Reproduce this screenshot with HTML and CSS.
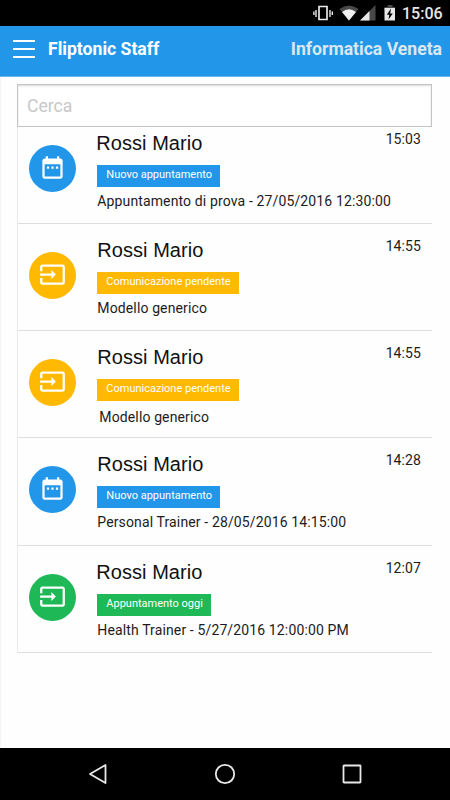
FILE: index.html
```html
<!DOCTYPE html>
<html lang="it">
<head>
    <meta charset="UTF-8">
    <meta name="viewport" content="width=device-width, initial-scale=1.0">
    <title>Fliptonic Staff</title>
    <link rel="stylesheet" href="styles.css">
</head>
<body>
    <!-- Icone condivise -->
    <svg width="0" height="0" class="sprite">
        <symbol id="icon-calendar" viewBox="0 0 24 24">
            <path fill="#fff" d="M9 11H7v2h2v-2zm4 0h-2v2h2v-2zm4 0h-2v2h2v-2zm2-7h-1V2h-2v2H8V2H6v2H5c-1.100 0-2 .9-2 2v14c0 1.100.9 2 2 2h14c1.100 0 2-.9 2-2V6c0-1.100-.9-2-2-2zm0 16H5V9h14v11z"/>
        </symbol>
        <symbol id="icon-input" viewBox="0 0 24 24">
            <path fill="#fff" d="M21 3H3c-1.100 0-2 .9-2 2v4h2V5h18v14H3v-4H1v4c0 1.100.9 2 2 2h18c1.100 0 2-.9 2-2V5c0-1.100-.9-2-2-2zM11 16l4-4-4-4v3H1v2h10v3z"/>
        </symbol>
    </svg>

    <div class="status-bar">
        <svg width="84" height="20" viewBox="0 0 84 20">
            <path d="M6 3.500h8v13H6z" fill="none" stroke="#e8e8e8" stroke-width="1.700"/>
            <path d="M3 7v7M17 7v7M.9 8.500v3.500M19.300 8.500v3.500" stroke="#e8e8e8" stroke-width="1.400"/>
            <path d="M26.500 6Q36-1 45.500 6L36 17.500z" fill="#484848"/>
            <path d="M29 9Q36 3.500 43 9L36 17.500z" fill="#f0f0f0"/>
            <path d="M62.500 2v15.500H47z" fill="#484848"/>
            <path d="M56.500 8v9.500H47z" fill="#e8e8e8"/>
            <path d="M74.500 2h5v2h2.500v3H71.500V4h3z" fill="#484848"/>
            <path d="M71.500 5H82v12.500H71.500z" fill="#e8e8e8"/>
            <path d="M78 5.500L73.800 11.800h2.500L75.500 16.500l4.300-6h-2.600z" fill="#000"/>
        </svg>
        <span class="clock">15:06</span>
    </div>

    <header class="top-bar">
        <div class="menu-icon"><span></span><span></span><span></span></div>
        <h1>Fliptonic Staff</h1>
        <span class="company">Informatica Veneta</span>
    </header>

    <main class="content">
        <input class="search" type="text" placeholder="Cerca">

        <ul class="list">
            <li class="item first">
                <div class="avatar blue"><svg class="calendar"><use href="#icon-calendar"/></svg></div>
                <div class="details">
                    <h2 class="shift-left">Rossi Mario</h2>
                    <span class="tag blue">Nuovo appuntamento</span>
                    <p>Appuntamento di prova - 27/05/2016 12:30:00</p>
                </div>
                <time>15:03</time>
            </li>
            <li class="item">
                <div class="avatar yellow"><svg class="input"><use href="#icon-input"/></svg></div>
                <div class="details">
                    <h2>Rossi Mario</h2>
                    <span class="tag yellow">Comunicazione pendente</span>
                    <p>Modello generico</p>
                </div>
                <time>14:55</time>
            </li>
            <li class="item">
                <div class="avatar yellow"><svg class="input"><use href="#icon-input"/></svg></div>
                <div class="details">
                    <h2>Rossi Mario</h2>
                    <span class="tag yellow">Comunicazione pendente</span>
                    <p class="indent">Modello generico</p>
                </div>
                <time>14:55</time>
            </li>
            <li class="item">
                <div class="avatar blue"><svg class="calendar"><use href="#icon-calendar"/></svg></div>
                <div class="details">
                    <h2>Rossi Mario</h2>
                    <span class="tag blue">Nuovo appuntamento</span>
                    <p>Personal Trainer - 28/05/2016 14:15:00</p>
                </div>
                <time>14:28</time>
            </li>
            <li class="item">
                <div class="avatar green"><svg class="input"><use href="#icon-input"/></svg></div>
                <div class="details">
                    <h2 class="shift-left">Rossi Mario</h2>
                    <span class="tag green">Appuntamento oggi</span>
                    <p>Health Trainer - 5/27/2016 12:00:00 PM</p>
                </div>
                <time>12:07</time>
            </li>
        </ul>
    </main>

    <nav class="nav-bar">
        <svg width="20" height="22" viewBox="0 0 20 22"><path d="M17.500 2v18L2 11z"/></svg>
        <svg width="22" height="22" viewBox="0 0 22 22"><circle cx="11" cy="11" r="9.200"/></svg>
        <svg width="20" height="22" viewBox="0 0 20 22"><rect x="1.500" y="2.500" width="17" height="17" rx=".5"/></svg>
    </nav>
</body>
</html>
```

FILE: styles.css
```css
* {
    box-sizing: border-box;
}
body {
    margin: 0;
    height: 800px;
    display: flex;
    flex-direction: column;
    font-family: Roboto, "Liberation Sans", sans-serif;
    color: #1c1c1c;
    background-color: #fefefe;
    overflow: hidden;
}
h1, h2, p, ul {
    margin: 0;
    padding: 0;
}
svg {
    display: block;
}
.sprite {
    position: absolute;
}

/* Barra di stato */
.status-bar {
    flex: none;
    height: 26px;
    display: flex;
    justify-content: flex-end;
    align-items: flex-start;
    padding: 3px 9px 0 0;
    background-color: #000;
}
.clock {
    width: 39px;
    margin-left: 5px;
    font-size: 16px;
    font-weight: 500;
    line-height: 22px;
    text-align: right;
    color: #e8e8e8;
}

/* Intestazione */
.top-bar {
    flex: none;
    height: 51px;
    display: flex;
    align-items: center;
    padding: 0 8px 5px 13px;
    background-color: #2297e9;
    border-bottom: 1px solid #6bb7ee;
    color: #fff;
}
.menu-icon {
    width: 22px;
    height: 18px;
    margin-right: 13px;
    display: flex;
    flex-direction: column;
    justify-content: space-between;
}
.menu-icon span {
    height: 2px;
    background-color: #fff;
}
.top-bar h1 {
    flex: 1;
    font-size: 17.600px;
    font-weight: 700;
}
.company {
    font-size: 17.600px;
    font-weight: 700;
    color: #dce6ef;
}

/* Elenco */
.content {
    flex: 1;
    padding: 7px 18px 0 16px;
    border-left: 1px solid #f5f5f5;
}
.search {
    display: block;
    width: 100%;
    height: 43px;
    padding: 0 9px;
    border: 1px solid #c4c4c4;
    border-radius: 0;
    background-color: #fff;
    box-shadow: inset 0 1px 2px rgba(0,0,0,0.15);
    font-family: inherit;
    font-size: 17.600px;
}
.search::placeholder {
    color: #c8c8c8;
    opacity: 1;
}
.list {
    list-style: none;
    border-left: 1px solid #eaeaea;
}
.item {
    height: 107.200px;
    display: flex;
    align-items: flex-start;
    padding: 14px 11px 0 11px;
    border-bottom: 1px solid #dedede;
}
.item.first {
    height: 97px;
    padding-top: 4px;
}
.avatar {
    flex: none;
    width: 47px;
    height: 47px;
    margin: 14px 21.300px 0 0;
    border-radius: 50%;
    display: flex;
    align-items: center;
    justify-content: center;
}
.calendar {
    width: 27px;
    height: 27px;
    margin-bottom: 3px;
}
.input {
    width: 27px;
    height: 27px;
    margin-bottom: 2px;
}
.details {
    flex: 1;
    min-width: 0;
    display: flex;
    flex-direction: column;
    align-items: flex-start;
    white-space: nowrap;
}
.details h2 {
    font-family: "Liberation Sans", Arial, sans-serif;
    font-size: 20px;
    font-weight: 400;
    line-height: 24px;
    letter-spacing: 0.050px;
    color: #111;
}
.details h2.shift-left {
    margin-left: -1px;
}
.tag {
    height: 22px;
    margin-top: 10px;
    padding: 0 8px 0 9px;
    font-size: 11px;
    line-height: 20px;
    color: #fff;
}
.details p {
    margin-top: 5px;
    font-size: 14px;
    line-height: 18px;
    letter-spacing: 0.130px;
}
.details p.indent {
    margin: 7px 0 0 2px;
}
time {
    font-size: 14px;
    line-height: 16px;
    letter-spacing: 0.100px;
}
.blue {
    background-color: #2297e9;
}
.yellow {
    background-color: #ffb900;
}
.green {
    background-color: #1eb856;
}

/* Barra di navigazione */
.nav-bar {
    flex: none;
    height: 52px;
    display: flex;
    align-items: center;
    justify-content: space-between;
    padding: 0 88px;
    background-color: #000;
}
.nav-bar svg {
    fill: none;
    stroke: #e8e8e8;
    stroke-width: 1.800;
    stroke-linejoin: round;
}
```
